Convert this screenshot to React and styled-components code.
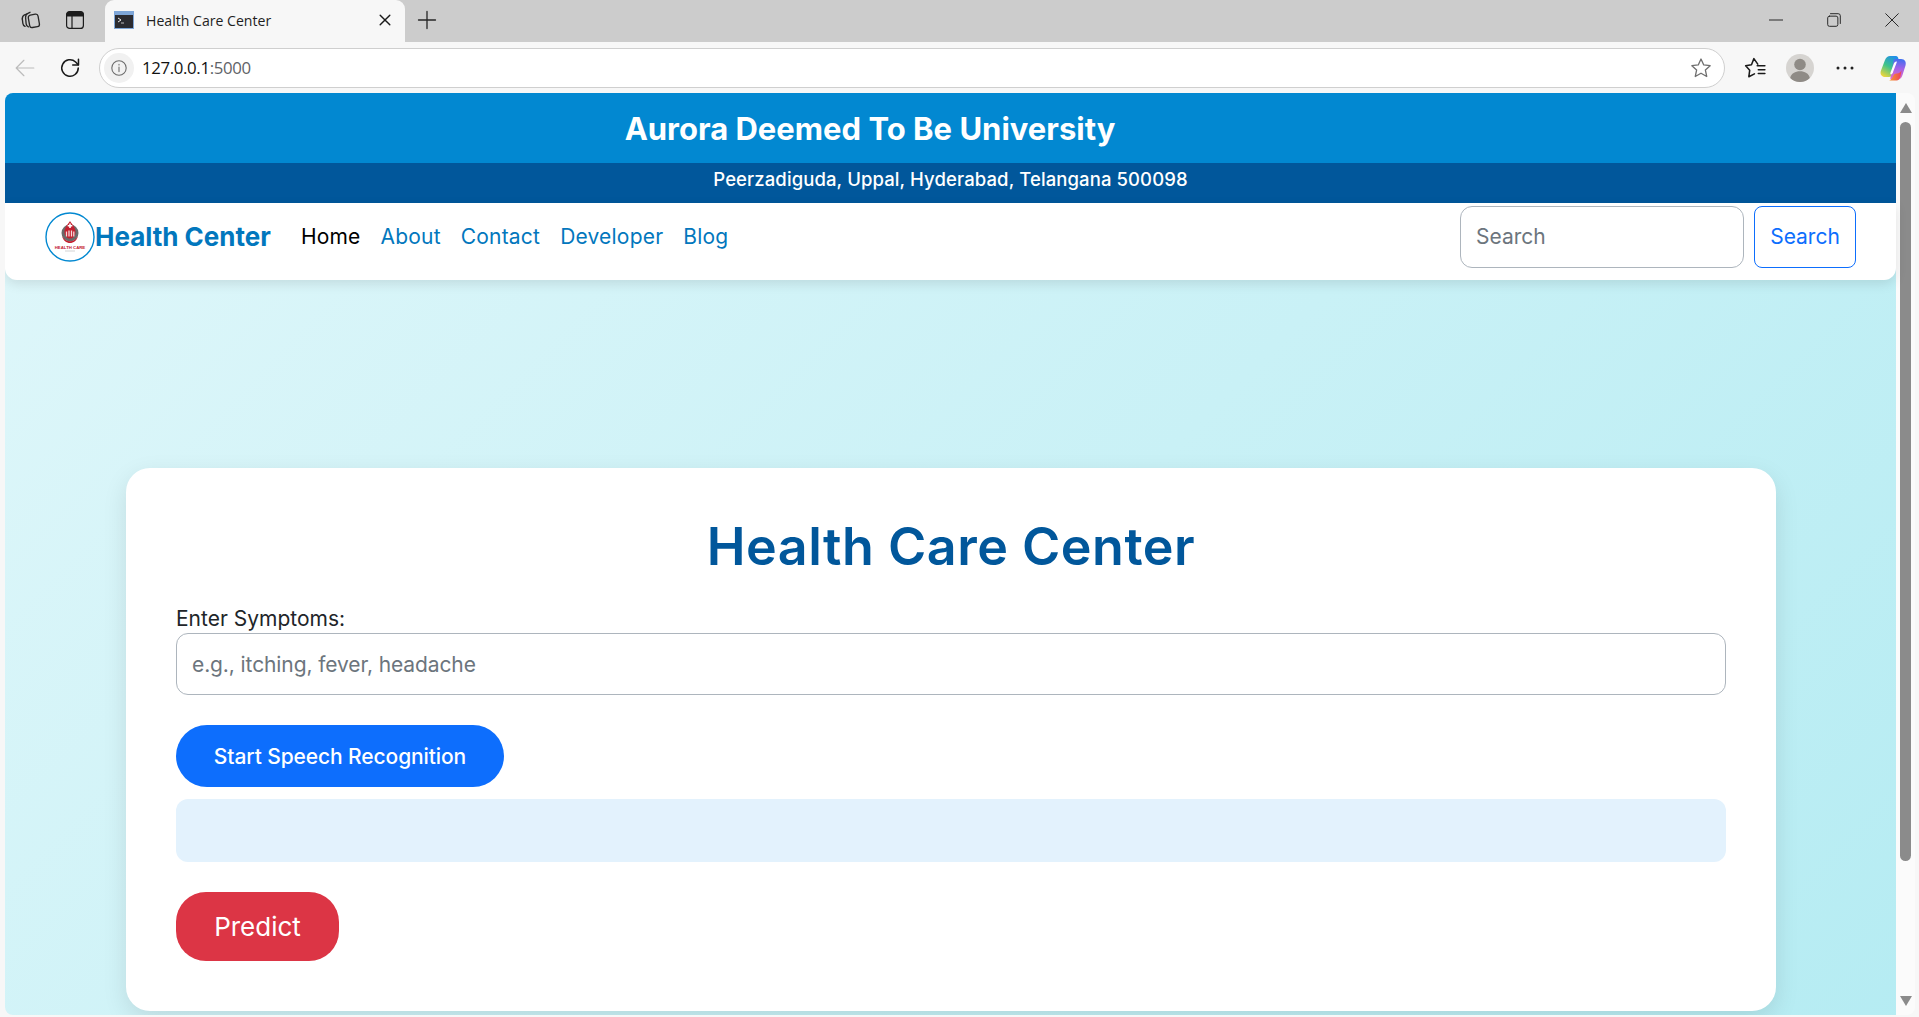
import React from 'react';
import styled, { createGlobalStyle } from 'styled-components';

const sans = `Inter, "Noto Sans", sans-serif`;
const ui = `"Open Sans", "Noto Sans", sans-serif`;

const GlobalStyle = createGlobalStyle`
  html, body { margin: 0; padding: 0; height: 100%; overflow: hidden; }
  * { box-sizing: border-box; }
  input::placeholder { color: #6c757d; opacity: 1; }
`;

// Browser chrome

const Window = styled.div`
  display: flex;
  flex-direction: column;
  width: 1919px;
  height: 1017px;
  background: #f7f7f7;
  overflow: hidden;
`;

const TabStrip = styled.div`
  display: flex;
  align-items: stretch;
  height: 42px;
  background: #cccccc;
`;

const StripIcon = styled.div`
  display: flex;
  align-items: center;
  justify-content: center;
  width: ${({ $w }) => $w || 46}px;
  padding-bottom: 2px;
  color: #2b2b2b;
`;

const Tab = styled.div`
  display: flex;
  align-items: center;
  width: 300px;
  margin-left: 15px;
  padding: 0 12px 2px 9px;
  background: #f7f7f7;
  border-radius: 9px 9px 0 0;
`;

const TabTitle = styled.span`
  flex: 1;
  margin-left: 12px;
  font: 400 14.1px ${ui};
  color: #1f1f1f;
`;

const WindowButtons = styled.div`
  display: flex;
  margin-left: auto;
`;

const Toolbar = styled.div`
  display: flex;
  align-items: center;
  height: 51px;
  padding: 1px 12.5px 0 14px;
  background: #f7f7f7;
`;

const ToolButton = styled.div`
  display: flex;
  align-items: center;
  justify-content: center;
  width: ${({ $w }) => $w || 46}px;
  margin-left: ${({ $ml }) => $ml || 0}px;
`;

const AddressBar = styled.div`
  display: flex;
  align-items: center;
  flex: 1;
  height: 40px;
  margin-left: 6px;
  padding: 0 12px 0 4px;
  background: #ffffff;
  border: 1px solid #cfcfcf;
  border-radius: 20px;
`;

const InfoBadge = styled.div`
  display: flex;
  align-items: center;
  justify-content: center;
  width: 30px;
  height: 30px;
  background: #f1f1f1;
  border-radius: 50%;
`;

const Url = styled.span`
  flex: 1;
  margin: 0 0 2px 8px;
  font: 400 16.8px ${ui};
  letter-spacing: -0.35px;
  color: #111111;

  span { color: #5f6368; }
`;

// Viewport

const Viewport = styled.div`
  display: flex;
  flex: 1;
  margin: 0 4px 2px 5px;
  border-radius: 8px;
  overflow: hidden;
`;

const Page = styled.main`
  flex: 1;
  min-width: 0;
  background: linear-gradient(135deg, #e0f7fa, #b2ebf2) no-repeat;
  background-size: 100% 1150px;
`;

const Scrollbar = styled.div`
  display: flex;
  flex-direction: column;
  align-items: center;
  width: 19px;
  padding: 10px 0 9px;
  background: #fbfbfb;
`;

const ScrollThumb = styled.div`
  width: 11px;
  height: 739px;
  margin-top: 9px;
  background: #8b8b8b;
  border-radius: 6px;
`;

const ScrollArrow = styled.div`
  width: 0;
  height: 0;
  margin-top: ${({ $auto }) => ($auto ? 'auto' : '0')};
  border-left: 6.5px solid transparent;
  border-right: 6.5px solid transparent;
  ${({ $down }) => ($down ? 'border-top' : 'border-bottom')}: 10px solid #8b8b8b;
`;

// Site header

const Banner = styled.div`
  display: flex;
  align-items: center;
  justify-content: center;
  height: 70px;
  padding-right: 161px;
  background: #0288d1;
  font: 700 31px ${sans};
  color: #ffffff;
`;

const Address = styled.div`
  display: flex;
  align-items: center;
  justify-content: center;
  height: 40px;
  padding-bottom: 8px;
  background: #01579b;
  font: 500 18.5px ${sans};
  letter-spacing: 0.1px;
  color: #ffffff;
`;

const Nav = styled.nav`
  position: relative;
  display: flex;
  align-items: center;
  height: 77px;
  padding: 0 40px 10px;
  background: #ffffff;
  border-radius: 0 0 12px 12px;
  box-shadow: 0 4px 12px rgba(0, 0, 0, 0.1);
`;

const Brand = styled.a`
  display: flex;
  align-items: center;
  margin-right: 30px;
  font: 700 26px ${sans};
  color: #0277bd;
`;

const NavLinks = styled.div`
  display: flex;
  gap: 20px;
`;

const NavLink = styled.a`
  font: 400 21px ${sans};
  letter-spacing: 0.2px;
  color: ${({ $active }) => ($active ? '#000000' : '#0277bd')};
`;

const SearchForm = styled.form`
  display: flex;
  gap: 10px;
  margin: 0 0 0 auto;
`;

const SearchInput = styled.input`
  width: 284px;
  height: 62px;
  padding: 0 15px;
  background: #ffffff;
  border: 1px solid #adb5bd;
  border-radius: 12px;
  font: 400 21px ${sans};
  outline: none;
`;

const SearchButton = styled.button`
  width: 102px;
  height: 62px;
  padding: 0;
  background: transparent;
  border: 1px solid #0d6efd;
  border-radius: 8px;
  font: 400 21px ${sans};
  color: #0d6efd;
`;

// Form card

const Card = styled.section`
  height: 543px;
  margin: 188px 120px 0 121px;
  padding: 50px;
  background: #ffffff;
  border-radius: 24px;
  box-shadow: 0 8px 24px rgba(0, 0, 0, 0.1);
`;

const Title = styled.h1`
  margin: 0 0 30px;
  font: 600 52px/58px ${sans};
  letter-spacing: 0.5px;
  text-align: center;
  color: #01579b;
`;

const Label = styled.label`
  display: block;
  height: 27px;
  font: 400 21px/26px ${sans};
  color: #212529;
`;

const SymptomInput = styled.input`
  display: block;
  width: 100%;
  height: 62px;
  padding: 0 15px;
  background: #ffffff;
  border: 1px solid #adb5bd;
  border-radius: 12px;
  font: 400 21px ${sans};
  letter-spacing: -0.1px;
  outline: none;
`;

const SpeechButton = styled.button`
  display: block;
  width: 328px;
  height: 62px;
  margin-top: 30px;
  padding: 0;
  background: #0d6efd;
  border: none;
  border-radius: 31px;
  font: 500 21px ${sans};
  letter-spacing: -0.1px;
  color: #ffffff;
`;

const Transcript = styled.div`
  height: 63px;
  margin-top: 12px;
  background: #e3f2fd;
  border-radius: 12px;
`;

const PredictButton = styled.button`
  display: block;
  width: 163px;
  height: 69px;
  margin-top: 30px;
  padding: 0;
  background: #dc3545;
  border: none;
  border-radius: 30px;
  font: 400 26px ${sans};
  color: #ffffff;
`;

// Drawings

const Stroke = ({ size = 20, children, color = '#262626', width = 1.3 }) => (
  <svg width={size} height={size} viewBox="0 0 20 20" fill="none" stroke={color} strokeWidth={width} strokeLinecap="round" strokeLinejoin="round">
    {children}
  </svg>
);

const Favicon = () => (
  <svg width="20" height="20" viewBox="0 0 20 20">
    <rect x="0" y="1" width="20" height="18" fill="#7ea6d8" />
    <rect x="1" y="5" width="18" height="13" fill="#2b2b30" />
    <path d="M4 8l3 2-3 2" fill="none" stroke="#eee" strokeWidth="1" />
    <path d="M7 13h3" stroke="#bbb" strokeWidth="1" />
  </svg>
);

const Copilot = () => (
  <svg width="28" height="28" viewBox="0 0 28 28">
    <defs>
      <linearGradient id="cpLeft" x1="0.7" y1="0" x2="0.2" y2="1">
        <stop offset="0" stopColor="#1f8fe8" />
        <stop offset="0.5" stopColor="#3fc48a" />
        <stop offset="1" stopColor="#f0d63a" />
      </linearGradient>
      <linearGradient id="cpRight" x1="0.6" y1="0" x2="0.5" y2="1">
        <stop offset="0" stopColor="#3f6ff0" />
        <stop offset="0.45" stopColor="#a262e8" />
        <stop offset="1" stopColor="#e86cc0" />
      </linearGradient>
      <linearGradient id="cpBottom" x1="0" y1="0" x2="1" y2="0">
        <stop offset="0" stopColor="#f7a02c" />
        <stop offset="1" stopColor="#ee3f5f" />
      </linearGradient>
    </defs>
    <path d="M11 2C9 2 7 3.500 6 6L1.800 17C.8 20.500 3 23 6 23h4c2 0 3-1 4-4l5-12c1-3 0-5-3-5z" fill="url(#cpLeft)" />
    <path d="M15 5h7c4 0 5.500 3 4.500 6.500L23.500 21c-1 3.500-3 5-6.500 5h-4c-2 0-2-2-1-4z" fill="url(#cpRight)" />
    <path d="M10 26.500h7.500c2 0 3.500-2 4-4.500l1.200-6c-1 2-2.500 3.500-4.700 3.500-2.500 0-3 1-4 3-.8 1.800-2 3.500-4 4z" fill="url(#cpBottom)" />
    <path d="M17.500 7.500c-1.500 0-2.200 1-2.800 2.500l-3.200 8.500c-.6 1.800.4 2.500 1.500 1.500 1-1 1-2 1.800-4l2.900-7.500c.2-.6.300-.9-.2-1z" fill="#ffffff" />
  </svg>
);

const Logo = () => (
  <svg width="50" height="50" viewBox="0 0 50 50">
    <circle cx="25" cy="25" r="24" fill="#ffffff" stroke="#0288d1" strokeWidth="1.400" />
    <circle cx="25" cy="21" r="8.500" fill="#6a6a6a" />
    <path d="M25 9c.8 2 5.500 5.500 5.500 11 0 4-2.500 6.500-5.500 6.500S19.500 24 19.500 20c0-5.500 4.700-9 5.500-11z" fill="#c4202f" />
    <path d="M24.200 11.500h1.600V13h1.500v1.500h-1.500v1.600h-1.600v-1.600h-1.500V13h1.500z" fill="#ffffff" />
    <path d="M21.500 24.500v-5M24 24.500v-6M26.500 24.500v-6M28.800 24.500v-5" stroke="#f4dcdc" strokeWidth="1.300" />
    <path d="M17 24c2 3.500 5 5.300 8 5.300s6-1.800 8-5.300c-1 4.500-4.500 7-8 7s-7-2.500-8-7z" fill="#c4202f" />
    <text x="25" y="36.800" textAnchor="middle" fontFamily="Liberation Sans, sans-serif" fontWeight="700" fontSize="4.300" fill="#c4202f">HEALTH CARE</text>
    <path d="M20 39h10" stroke="#b5b5b5" strokeWidth="0.600" />
  </svg>
);

const Avatar = () => (
  <svg width="28" height="28" viewBox="0 0 28 28">
    <circle cx="14" cy="14" r="14" fill="#d6d4d1" />
    <circle cx="14" cy="10.500" r="5.800" fill="#8f8b86" />
    <path d="M4.200 24c1-4.500 5-6.700 9.800-6.700s8.800 2.200 9.800 6.700a14 14 0 0 1-19.600 0z" fill="#8f8b86" />
  </svg>
);

const App = () => (
  <Window>
    <GlobalStyle />

    <TabStrip>
      <StripIcon $w={60}>
        <Stroke size={22} width={1.200}>
          <path d="M3 9c0-2 .5-3 2-3.600L7 4.600" />
          <path d="M3 9l.5 4c.2 1.500.8 2.300 2 2.800" />
          <path d="M6 7.500c0-2 .5-3 2-3.600l2-.9" />
          <path d="M6 8l.5 5.500c.2 1.500.8 2.300 2 2.800" />
          <rect x="9" y="5" width="9" height="11.500" rx="2.200" transform="rotate(-10 13.500 10.700)" />
        </Stroke>
      </StripIcon>
      <StripIcon $w={30}>
        <svg width="18" height="18" viewBox="0 0 18 18" fill="none" stroke="#1c1c1c" strokeWidth="1.200">
          <rect x="0.600" y="0.600" width="16.800" height="16.800" rx="3" />
          <path d="M1 5V3.500C1 2 2 1 3.500 1h11C16 1 17 2 17 3.500V5z" fill="#1c1c1c" />
          <path d="M6 5v12.400" />
        </svg>
      </StripIcon>
      <Tab>
        <Favicon />
        <TabTitle>Health Care Center</TabTitle>
        <Stroke size={16} color="#1a1a1a" width={1.800}>
          <path d="M4 4l12 12M16 4L4 16" />
        </Stroke>
      </Tab>
      <StripIcon $w={44}>
        <Stroke>
          <path d="M10 1.500v17M1.500 10h17" />
        </Stroke>
      </StripIcon>
      <WindowButtons>
        <StripIcon $w={55}>
          <Stroke size={14} width={1.400}><path d="M0 10h20" /></Stroke>
        </StripIcon>
        <StripIcon $w={62}>
          <Stroke size={14} width={1.400}>
            <rect x="1" y="4.500" width="14.500" height="14.500" rx="2.500" />
            <path d="M5 1h11a3 3 0 0 1 3 3v11" />
          </Stroke>
        </StripIcon>
        <StripIcon $w={54}>
          <Stroke size={14} width={1.400}><path d="M1 1l18 18M19 1L1 19" /></Stroke>
        </StripIcon>
      </WindowButtons>
    </TabStrip>

    <Toolbar>
      <ToolButton $w={22}>
        <Stroke size={22} color="#bcbcbc" width={1.100}>
          <path d="M18 10H2M9 3l-7 7 7 7" />
        </Stroke>
      </ToolButton>
      <ToolButton $w={46} $ml={11}>
        <Stroke size={22} color="#1a1a1a" width={1.400}>
          <path d="M17.500 10a7.500 7.500 0 1 1-2.400-5.500L17.500 7" />
          <path d="M17.700 2v5.200h-5.200" />
        </Stroke>
      </ToolButton>
      <AddressBar>
        <InfoBadge>
          <Stroke size={18} color="#6b6b6b" width={1.200}>
            <circle cx="10" cy="10" r="8" />
            <path d="M10 9v5M10 6v.6" />
          </Stroke>
        </InfoBadge>
        <Url>127.0.0.1<span>:5000</span></Url>
        <Stroke size={22} color="#6f6f6f" width={1.200}>
          <path d="M10 1.800l2.500 5.400 5.800.7-4.300 4 1.200 5.800L10 14.800l-5.200 2.900L6 11.900l-4.300-4 5.800-.7z" />
        </Stroke>
      </AddressBar>
      <ToolButton $w={22} $ml={18.500}>
        <Stroke size={22} color="#1a1a1a" width={1.400}>
          <path d="M12.500 6.500L9 1.500 6.800 7 1.500 8l3.700 4-.8 6 5.100-2.700" />
          <path d="M12 8h7M13 11.500h6M13 15h6" />
        </Stroke>
      </ToolButton>
      <ToolButton $w={28} $ml={20.700}><Avatar /></ToolButton>
      <ToolButton $w={20} $ml={20.700}>
        <svg width="18" height="4" viewBox="0 0 18 4" fill="#222222">
          <circle cx="2" cy="2" r="1.500" /><circle cx="9" cy="2" r="1.500" /><circle cx="16" cy="2" r="1.500" />
        </svg>
      </ToolButton>
      <ToolButton $w={28} $ml={23.600}><Copilot /></ToolButton>
    </Toolbar>

    <Viewport>
      <Page>
        <Banner>Aurora Deemed To Be University</Banner>
        <Address>Peerzadiguda, Uppal, Hyderabad, Telangana 500098</Address>
        <Nav>
          <Brand><Logo />Health Center</Brand>
          <NavLinks>
            <NavLink $active>Home</NavLink>
            <NavLink>About</NavLink>
            <NavLink>Contact</NavLink>
            <NavLink>Developer</NavLink>
            <NavLink>Blog</NavLink>
          </NavLinks>
          <SearchForm>
            <SearchInput placeholder="Search" />
            <SearchButton type="button">Search</SearchButton>
          </SearchForm>
        </Nav>

        <Card>
          <Title>Health Care Center</Title>
          <Label>Enter Symptoms:</Label>
          <SymptomInput placeholder="e.g., itching, fever, headache" />
          <SpeechButton type="button">Start Speech Recognition</SpeechButton>
          <Transcript />
          <PredictButton type="button">Predict</PredictButton>
        </Card>
      </Page>
      <Scrollbar>
        <ScrollArrow />
        <ScrollThumb />
        <ScrollArrow $down $auto />
      </Scrollbar>
    </Viewport>
  </Window>
);

export default App;
